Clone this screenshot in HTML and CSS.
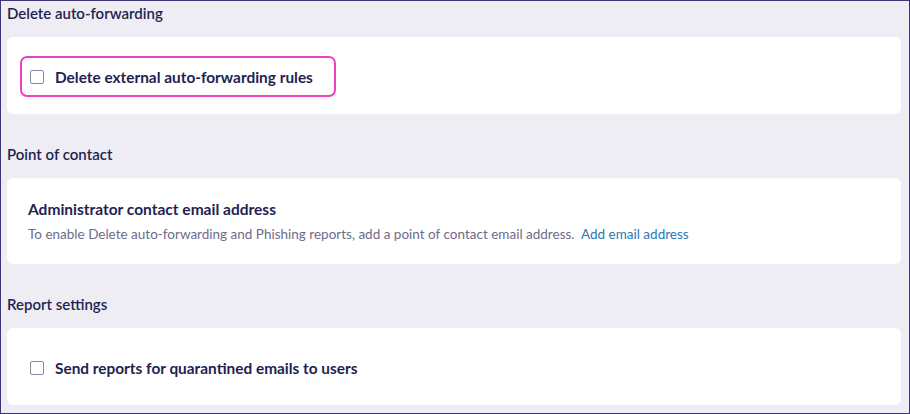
FILE: index.html
```html
<!DOCTYPE html>
<html lang="en">
<head>
<meta charset="utf-8">
<title>Settings</title>
<link rel="stylesheet" href="styles.css">
</head>
<body>
<div class="frame">
  <section class="section">
    <h2 class="section-title">Delete auto-forwarding</h2>
    <div class="card card-check">
      <label class="check-row focused">
        <span class="checkbox"></span>
        <span class="check-label">Delete external auto-forwarding rules</span>
      </label>
    </div>
  </section>
  <section class="section">
    <h2 class="section-title">Point of contact</h2>
    <div class="card card-info">
      <div class="info-title">Administrator contact email address</div>
      <div class="info-desc">To enable Delete auto-forwarding and Phishing reports, add a point of contact email address. <a class="link" href="#">Add email address</a></div>
    </div>
  </section>
  <section class="section">
    <h2 class="section-title">Report settings</h2>
    <div class="card card-check">
      <label class="check-row">
        <span class="checkbox"></span>
        <span class="check-label">Send reports for quarantined emails to users</span>
      </label>
    </div>
  </section>
</div>
</body>
</html>
```
FILE: styles.css
```css
* { box-sizing: border-box; }
html, body { margin: 0; padding: 0; }
body {
  font-family: "Source Sans Pro", Lato, "Open Sans", sans-serif;
  color: #231f52;
}
.frame {
  width: 910px;
  height: 414px;
  border: 1px solid #3d3575;
  background: #eeedf4;
  padding: 0 8px 0 6px;
  display: flex;
  flex-direction: column;
  gap: 28px;
  overflow: hidden;
}
.section {
  display: flex;
  flex-direction: column;
  gap: 12px;
}
.section-title {
  margin: 0;
  font-size: 15px;
  font-weight: 600;
  line-height: 24px;
  height: 24px;
}
.card {
  background: #ffffff;
  border-radius: 6px;
}
.card-check {
  height: 77px;
  padding: 19px 13px 0;
}
.check-row {
  display: inline-flex;
  align-items: center;
  gap: 11px;
  height: 41px;
  padding: 0 21px 0 8px;
  border: 2px solid transparent;
  border-radius: 7px;
  cursor: pointer;
}
.check-row.focused {
  border-color: #f040c2;
}
.checkbox {
  width: 14px;
  height: 14px;
  border: 1.5px solid #8a88a6;
  border-radius: 2px;
  background: #fff;
  flex: none;
}
.check-label {
  font-size: 15.4px;
  font-weight: 700;
}
.card-info {
  height: 86px;
  padding: 21px 21px 0;
}
.info-title {
  font-size: 15.5px;
  font-weight: 700;
  line-height: 20px;
}
.info-desc {
  margin-top: 6px;
  font-size: 13.5px;
  line-height: 18px;
  color: #6e6c8a;
}
.link {
  color: #2a78b6;
  text-decoration: none;
  margin-left: 3px;
}
```
